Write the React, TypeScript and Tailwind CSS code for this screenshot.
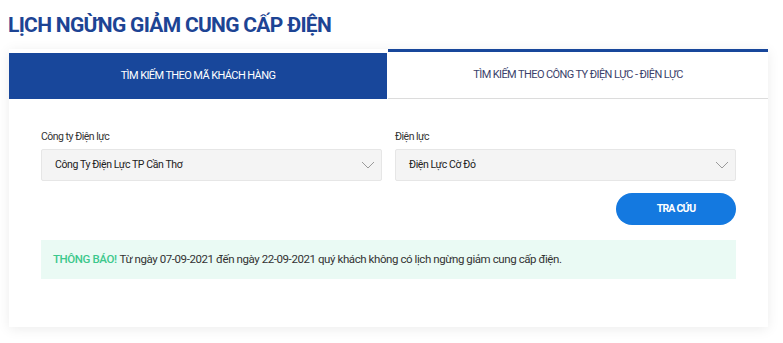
import React from "react";

function Chevron() {
  return (
    <svg width="14" height="8" viewBox="0 0 14 8" fill="none">
      <path d="M1 1l6 6 6-6" stroke="#9a9a9a" strokeWidth="1" />
    </svg>
  );
}

function Select({ label, value }: { label: string; value: string }) {
  return (
    <div className="flex flex-col">
      <div className="text-[10.5px] tracking-[-0.5px] text-[#333] leading-[14px] mb-[5px]">{label}</div>
      <div className="h-[32px] bg-[#f4f4f4] border border-[#e6e6e6] rounded-[2px] flex items-center justify-between pl-[13px] pr-[6px]">
        <span className="text-[10.5px] tracking-[-0.4px] text-[#222]">{value}</span>
        <Chevron />
      </div>
    </div>
  );
}

export default function App() {
  return (
    <div className="w-[783px] h-[343px] bg-white" style={{ fontFamily: "Roboto, 'Noto Sans', sans-serif" }}>
      <div className="pl-[8px] pt-[12px]">
        <h1 className="text-[21px] font-bold text-[#1d4494] leading-[26px] tracking-[-0.7px]" style={{ fontFamily: "Roboto, 'Noto Sans', sans-serif" }}>
          LỊCH NGỪNG GIẢM CUNG CẤP ĐIỆN
        </h1>
      </div>
      <div className="ml-[9px] mt-[11px] w-[759px] h-[278px] bg-white shadow-[0_2px_12px_rgba(0,0,0,0.08)] flex flex-col">
        <div className="flex h-[50px]">
          <div className="w-[378px] mt-[4px] bg-[#18479b] flex items-center justify-center text-white text-[11px] tracking-[-0.6px]">
            TÌM KIẾM THEO MÃ KHÁCH HÀNG
          </div>
          <div className="ml-[1px] flex-1 border-t-[3px] border-[#18479b] border-b border-b-[#dcdcdc] flex items-center justify-center text-[11px] tracking-[-0.6px] text-[#3b3f6b]">
            TÌM KIẾM THEO CÔNG TY ĐIỆN LỰC - ĐIỆN LỰC
          </div>
        </div>
        <div className="px-[32px] pt-[31px]">
          <div className="grid grid-cols-2 gap-[13px]">
            <Select label="Công ty Điện lực" value="Công Ty Điện Lực TP Cần Thơ" />
            <Select label="Điện lực" value="Điện Lực Cờ Đỏ" />
          </div>
          <div className="flex justify-end mt-[12px]">
            <button className="w-[120px] h-[32px] rounded-full bg-[#1479e0] text-white text-[10.5px] tracking-[-0.8px] font-bold">
              TRA CỨU
            </button>
          </div>
          <div className="mt-[15px] h-[39px] bg-[#eafaf4] flex items-center pl-[12px] text-[11.5px] tracking-[-0.42px] text-[#333]">
            <span className="text-[#3cc88c] font-medium mr-[3px]">THÔNG BÁO!</span>
            Từ ngày 07-09-2021 đến ngày 22-09-2021 quý khách không có lịch ngừng giảm cung cấp điện.
          </div>
        </div>
      </div>
    </div>
  );
}
